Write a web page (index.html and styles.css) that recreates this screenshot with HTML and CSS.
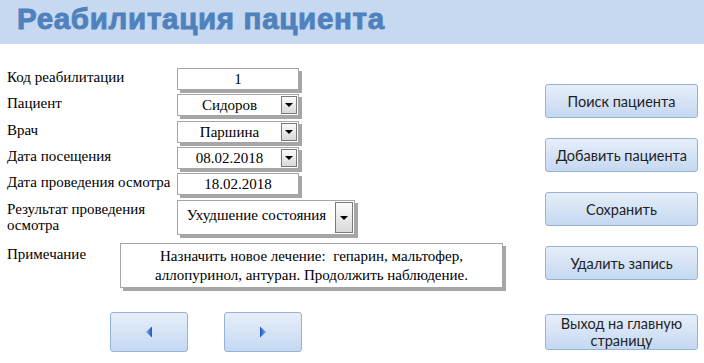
FILE: index.html
```html
<!DOCTYPE html>
<html>
<head>
<meta charset="utf-8">
<link rel="stylesheet" href="styles.css">
</head>
<body class="page">
<div class="header"><h1 class="title">Реабилитация пациента</h1></div>
<div class="main">
  <div class="form">
    <div class="row r1"><p class="label">Код реабилитации</p><p class="field">1</p></div>
    <div class="row r2"><p class="label">Пациент</p><div class="field combo"><p class="val">Сидоров</p><span class="drop"><i></i></span></div></div>
    <div class="row r3"><p class="label">Врач</p><div class="field combo"><p class="val">Паршина</p><span class="drop"><i></i></span></div></div>
    <div class="row r4"><p class="label">Дата посещения</p><div class="field combo"><p class="val">08.02.2018</p><span class="drop"><i></i></span></div></div>
    <div class="row r5"><p class="label">Дата проведения осмотра</p><p class="field">18.02.2018</p></div>
    <div class="row r6"><p class="label">Результат проведения осмотра</p><div class="field combo big"><p class="val">Ухудшение состояния</p><span class="drop"><i></i></span></div></div>
    <div class="row r7"><p class="label short">Примечание</p><p class="field memo">Назначить новое лечение:&nbsp; гепарин, мальтофер, аллопуринол, антуран. Продолжить наблюдение.</p></div>
    <div class="nav">
      <button class="btn navbtn" aria-label="Назад"><svg width="8" height="12" viewBox="0 0 8 12"><defs><linearGradient id="ga" x1="0" y1="0" x2="1" y2="0"><stop offset="0" stop-color="#7fa8ea"/><stop offset="1" stop-color="#1f55c8"/></linearGradient></defs><polygon points="7,0.5 7,11.5 1,6" fill="url(#ga)"/></svg></button>
      <button class="btn navbtn" aria-label="Вперёд"><svg width="8" height="12" viewBox="0 0 8 12"><defs><linearGradient id="gb" x1="0" y1="0" x2="1" y2="0"><stop offset="0" stop-color="#1f55c8"/><stop offset="1" stop-color="#7fa8ea"/></linearGradient></defs><polygon points="1,0.5 1,11.5 7,6" fill="url(#gb)"/></svg></button>
    </div>
  </div>
  <div class="actions">
    <button class="btn act">Поиск пациента</button>
    <button class="btn act">Добавить пациента</button>
    <button class="btn act">Сохранить</button>
    <button class="btn act">Удалить запись</button>
    <button class="btn act exit">Выход на главную страницу</button>
  </div>
</div>
</body>
</html>
```

FILE: styles.css
```css
html, body { margin: 0; padding: 0; background: #fff; }
.page { margin: 0; font-family: "Liberation Serif", "Times New Roman", serif; font-size: 15px; color: #000; width: 704px; height: 363px; overflow: hidden; }
.label { font-family: "Liberation Serif", "Times New Roman", serif; margin: 0; }
.field { font-family: "Liberation Serif", "Times New Roman", serif; margin: 0; }
.val { font-family: "Liberation Serif", "Times New Roman", serif; margin: 0; }

.header { height: 44px; background: #c6d9f1; padding-left: 17px; box-sizing: border-box; }
.title { margin: 0; font-family: "Liberation Sans", sans-serif; font-weight: 900; font-size: 29.5px; line-height: 38px; color: #4f81bd; letter-spacing: 0.7px; -webkit-text-stroke: 0.9px #4f81bd; }

.main { display: flex; padding-left: 7px; }
.form { width: 538px; display: flex; flex-direction: column; }

.row { display: flex; align-items: flex-start; }
.label { width: 170px; line-height: 16px; padding-top: 1px; font-size: 15px; }
.label.short { width: 113px; padding-top: 3px; }

.field { background: #fff; border: 1px solid #a6a6a6; box-shadow: 3px 3px 0 #a6a6a6; box-sizing: border-box; width: 122px; height: 22px; line-height: 20px; text-align: center; display: flex; justify-content: center; font-size: 15px; }
.combo { justify-content: space-between; align-items: center; }
.combo .val { flex: 1; text-align: center; }
.drop { width: 16px; height: 18px; box-sizing: border-box; border: 1px solid #7a7a7a; background: linear-gradient(#fbfbfb, #d9d9d9); margin-right: 1px; display: flex; align-items: center; justify-content: center; }
.drop i { width: 0; height: 0; border-left: 4px solid transparent; border-right: 4px solid transparent; border-top: 4px solid #000; }

.r1 { margin-top: 24px; }
.r2 { margin-top: 4px; }
.r3 { margin-top: 5px; }
.r4 { margin-top: 4px; }
.r5 { margin-top: 4px; }
.r6 { margin-top: 5px; }
.r6 .label { width: 150px; margin-right: 20px; }
.big { width: 178px; height: 35px; align-items: flex-start; }
.big .val { padding-top: 4px; }
.big .drop { height: 31px; width: 18px; margin-top: 1px; }
.r7 { margin-top: 8px; }
.memo { width: 383px; height: 45px; line-height: 19px; padding: 3px 2px 0; display: block; }

.nav { display: flex; gap: 36px; margin-top: 24px; padding-left: 103px; }

.btn { font-family: Lato, sans-serif; font-size: 14.5px; color: #1f1f1f; background: linear-gradient(#e6eef9, #c5d8f1); border: 1px solid #95b3d7; border-radius: 3px; box-sizing: border-box; padding: 0; cursor: default; }
.navbtn { width: 78px; height: 40px; display: flex; align-items: center; justify-content: center; }

.actions { display: flex; flex-direction: column; gap: 20px; padding-top: 40px; }
.act { width: 153px; height: 34px; line-height: 17px; }
.exit { margin-top: 14px; height: 36px; padding: 0 14px; }
```
